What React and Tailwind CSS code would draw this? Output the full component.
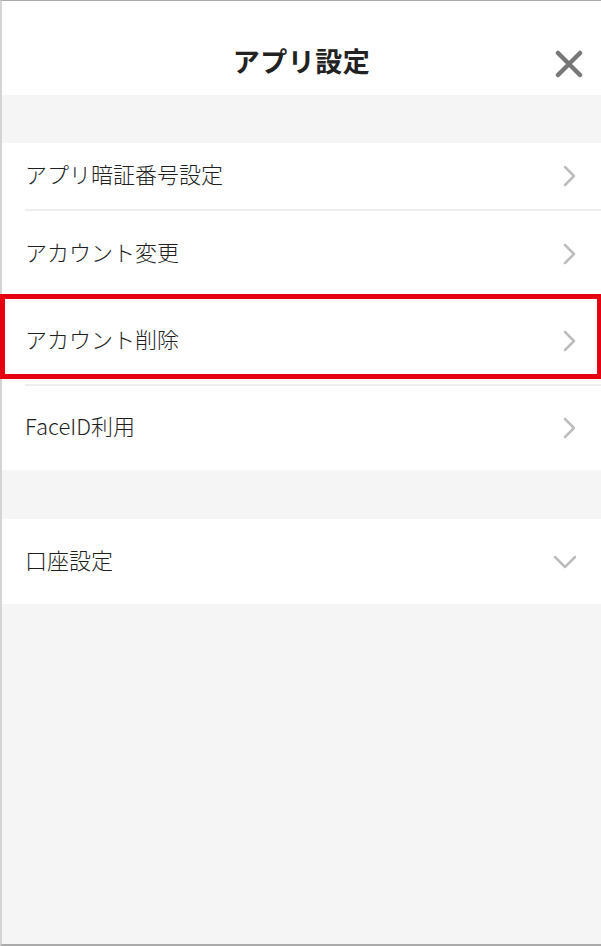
import React from "react";

const ChevronRight = () => (
  <svg width="14" height="22" viewBox="0 0 14 22" fill="none">
    <path d="M2 2l9 9-9 9" stroke="#bdbdbd" strokeWidth="2.5" strokeLinecap="round" strokeLinejoin="round" />
  </svg>
);

const ChevronDown = () => (
  <svg width="24" height="14" viewBox="0 0 24 14" fill="none">
    <path d="M2 2l10 10 10-10" stroke="#bdbdbd" strokeWidth="2.5" strokeLinecap="round" strokeLinejoin="round" />
  </svg>
);

const Row = ({ label, height, last }) => (
  <div className={last ? "" : "border-b-2 border-[#eeeeee]"}>
    <div className={`flex items-center justify-between pr-[24px] ${height}`}>
      <span className="pb-[5px] text-[22px] font-light text-[#1f1f1f]">{label}</span>
      <ChevronRight />
    </div>
  </div>
);

const App = () => {
  return (
    <div
      className="relative flex h-[946px] flex-col border-t border-l-2 border-b-2 border-t-[#ababab] border-l-[#d4d4d4] border-b-[#aaaaaa] bg-[#f5f5f5]"
      style={{ fontFamily: '"Noto Sans CJK JP", "Noto Sans", sans-serif' }}
    >
      <header className="relative flex h-[94px] items-start justify-center bg-white pt-[41px]">
        <h1 className="text-[27px] leading-[38px] font-bold tracking-[0.5px] text-[#222222]">アプリ設定</h1>
        <button className="absolute right-[18px] top-[49px]">
          <svg width="28" height="28" viewBox="0 0 28 28" fill="none">
            <path d="M3 3l22 22M25 3L3 25" stroke="#777777" strokeWidth="4.5" strokeLinecap="round" />
          </svg>
        </button>
      </header>

      <div className="mt-[48px] bg-white pl-[23px]">
        <Row label="アプリ暗証番号設定" height="h-[66px]" />
        <Row label="アカウント変更" height="h-[85px]" />
        <Row label="アカウント削除" height="h-[86px]" />
        <Row label="FaceID利用" height="h-[84px]" last />
      </div>

      <div className="mt-[49px] flex h-[85px] items-center justify-between bg-white pl-[23px] pr-[24px]">
        <span className="pb-[5px] text-[22px] font-light text-[#1f1f1f]">口座設定</span>
        <ChevronDown />
      </div>

      <div className="pointer-events-none absolute left-[-2px] top-[293px] h-[85px] w-[602px] border-[5px] border-[#e60012]" />
    </div>
  );
};

export default App;
